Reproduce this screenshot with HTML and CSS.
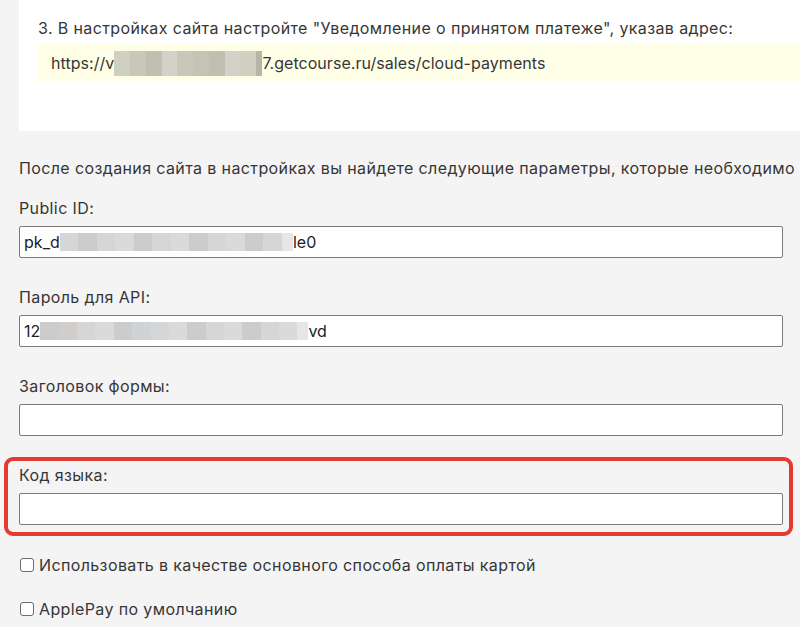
FILE: index.html
```html
<!DOCTYPE html>
<html lang="ru">
<head>
<meta charset="utf-8">
<link rel="stylesheet" href="styles.css">
</head>
<body>
<div class="page">
  <div class="card">
    <p class="step">3. В настройках сайта настройте "Уведомление о принятом платеже", указав адрес:</p>
    <div class="url">https://v<span class="blur blur-url"><i class="b1"></i><i class="b2"></i><i class="b3"></i><i class="b4"></i><i class="b2"></i><i class="b5"></i><i class="b3"></i><i class="b4"></i><i class="b1"></i><i class="b6"></i></span>7.getcourse.ru/sales/cloud-payments</div>
  </div>

  <p class="intro">После создания сайта в настройках вы найдете следующие параметры, которые необходимо</p>

  <div class="field">
    <label class="label">Public ID:</label>
    <div class="input">pk_d<span class="blur blur-id"><i class="g1"></i><i class="g2"></i><i class="g1"></i><i class="g3"></i><i class="g2"></i><i class="g1"></i><i class="g3"></i><i class="g2"></i><i class="g1"></i><i class="g3"></i><i class="g2"></i><i class="g1"></i><i class="g4"></i></span>le0</div>
  </div>

  <div class="field">
    <label class="label">Пароль для API:</label>
    <div class="input">12<span class="blur blur-pw"><i class="g2"></i><i class="g5"></i><i class="g1"></i><i class="g3"></i><i class="g2"></i><i class="g6"></i><i class="g1"></i><i class="g3"></i><i class="g2"></i><i class="g1"></i><i class="g3"></i><i class="g2"></i><i class="g1"></i><i class="g3"></i><i class="g4"></i></span>vd</div>
  </div>

  <div class="field">
    <label class="label">Заголовок формы:</label>
    <div class="input"></div>
  </div>

  <div class="field highlighted">
    <label class="label">Код языка:</label>
    <div class="input"></div>
  </div>

  <label class="check"><span class="box"></span>Использовать в качестве основного способа оплаты картой</label>
  <label class="check"><span class="box"></span>ApplePay по умолчанию</label>
</div>
</body>
</html>
```

FILE: styles.css
```css
html, body {
  margin: 0;
  padding: 0;
  background: #f4f4f4;
  overflow: hidden;
}

body {
  font-family: "Inter", "Noto Sans", sans-serif;
  font-size: 16px;
  line-height: 20px;
  letter-spacing: 0.38px;
  color: #363636;
}

.page {
  width: 800px;
  height: 627px;
  overflow: hidden;
  padding-left: 19px;
  box-sizing: border-box;
}

.card {
  background: #ffffff;
  padding: 18px 0 50px 19px;
}

.step {
  margin: 0;
  white-space: nowrap;
}

.url {
  margin-top: 6px;
  height: 37px;
  background: #ffffe8;
  padding-left: 13px;
  display: flex;
  align-items: center;
  white-space: nowrap;
  font-size: 16px;
  letter-spacing: 0.05px;
}

.blur {
  display: inline-flex;
  align-self: center;
}

.blur i {
  display: block;
  flex: 1;
}

.blur-url {
  width: 148px;
  height: 25px;
  margin-top: 2px;
}
.blur-url .b1 { background: #cfcfc2; }
.blur-url .b2 { background: #c8c8ba; }
.blur-url .b3 { background: #bfbfb2; }
.blur-url .b4 { background: #d2d2c6; }
.blur-url .b5 { background: #c3c3b6; }
.blur-url .b6 { background: #b5b5a8; flex: 0.4; }

.blur-id {
  width: 233px;
  height: 18px;
}

.blur-pw {
  width: 268px;
  height: 18px;
}

.g1 { background: #d6d6d6; }
.g2 { background: #cccccc; }
.g3 { background: #dadada; }
.g4 { background: #e6e6e6; flex: 0.6 !important; }
.g5 { background: #d2cdcb; }
.g6 { background: #cfd3d6; }

.intro {
  margin: 27px 0 0 0;
  white-space: nowrap;
}

.field {
  width: 764px;
  margin-top: 20px;
}

.label {
  display: block;
  height: 20px;
}

.input {
  margin-top: 8px;
  height: 32px;
  box-sizing: border-box;
  border: 1px solid #7a7a7a;
  border-radius: 2px;
  background: #ffffff;
  padding-left: 4px;
  display: flex;
  align-items: center;
  white-space: nowrap;
  font-size: 16px;
  letter-spacing: 0.05px;
  color: #222;
}

.field + .field {
  margin-top: 29px;
}

.highlighted {
  position: relative;
}

.highlighted::after {
  content: "";
  position: absolute;
  top: -8px;
  left: -15px;
  right: -10px;
  bottom: -11px;
  border: 4px solid #e53a31;
  border-radius: 9px;
  pointer-events: none;
}

.check {
  display: flex;
  align-items: center;
  height: 20px;
  margin-top: 30px;
  padding-left: 1px;
}

.check + .check {
  margin-top: 24px;
}

.box {
  width: 12px;
  height: 12px;
  border: 1px solid #6b6b6b;
  border-radius: 3px;
  background: #fff;
  margin-right: 5px;
  flex: none;
}
```
